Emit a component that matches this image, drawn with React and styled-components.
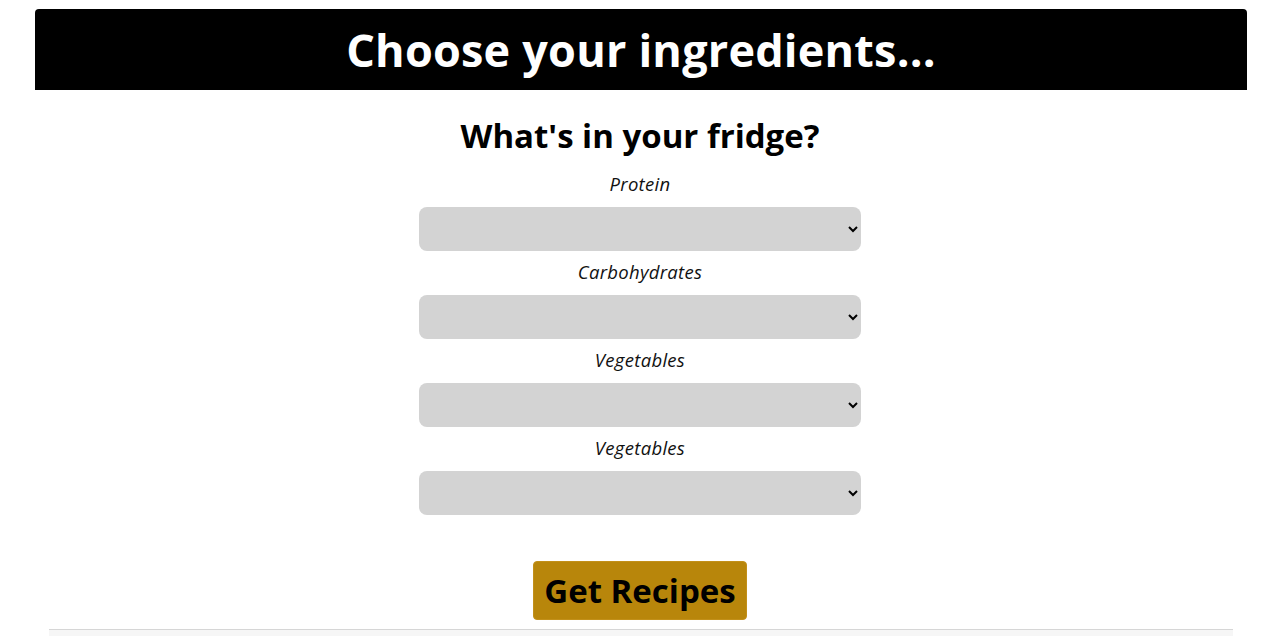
import React from 'react';
import styled, { createGlobalStyle } from 'styled-components';

const GlobalStyle = createGlobalStyle`
  body {
    margin: 8px;
    background: #ffffff;
    font-family: "Open Sans", "Noto Sans", sans-serif;
    color: #000;
  }
`;

const Page = styled.div`
  display: flex;
  flex-direction: column;
  align-items: center;
`;

const Header = styled.header`
  box-sizing: border-box;
  width: calc(100% - 52px);
  margin: 1px 0 0 2px;
  height: 81px;
  background: #000;
  border-radius: 4px 4px 0 0;
  display: flex;
  align-items: center;
  justify-content: center;
`;

const Title = styled.h1`
  margin: 0;
  color: #fff;
  font-size: 45px;
  font-weight: 700;
  letter-spacing: 0.2px;
`;

const Form = styled.form`
  display: flex;
  flex-direction: column;
  align-items: center;
  width: 100%;
`;

const Subtitle = styled.h2`
  margin: 26px 0 7px;
  font-size: 33px;
  font-weight: 700;
  line-height: 40px;
`;

const Field = styled.div`
  display: flex;
  flex-direction: column;
  align-items: center;
`;

const Label = styled.label`
  margin-top: 8px;
  font-size: 18.5px;
  font-style: italic;
  line-height: 26px;
  color: #111;
  letter-spacing: 0.3px;
`;

const Select = styled.select`
  margin-top: 10px;
  width: 442px;
  height: 44px;
  background: #d3d3d3;
  border: none;
  border-radius: 8px;
  font-family: inherit;
  font-size: 16px;
  padding: 0 8px;
  outline: none;
`;

const Button = styled.button`
  margin-top: 46px;
  width: 214px;
  height: 59px;
  background: #b8860b;
  border: 1px solid #c2901a;
  border-radius: 4px;
  font-family: "Open Sans", "Noto Sans", sans-serif;
  font-size: 33px;
  font-weight: 700;
  color: #000;
  cursor: pointer;
  padding: 0;
`;

const Footer = styled.footer`
  box-sizing: border-box;
  margin: 9px 0 0 2px;
  width: calc(100% - 80px);
  height: 7px;
  border-top: 1px solid #d6d6d6;
  background: #f6f6f6;
`;

const fields = ['Protein', 'Carbohydrates', 'Vegetables', 'Vegetables'];

function App() {
  return (
    <>
      <GlobalStyle />
      <Page>
        <Header>
          <Title>Choose your ingredients...</Title>
        </Header>
        <Form onSubmit={(e) => e.preventDefault()}>
          <Subtitle>What's in your fridge?</Subtitle>
          {fields.map((name, i) => (
            <Field key={i}>
              <Label>{name}</Label>
              <Select defaultValue="">
                <option value=""></option>
              </Select>
            </Field>
          ))}
          <Button type="submit">Get Recipes</Button>
        </Form>
        <Footer />
      </Page>
    </>
  );
}

export default App;
